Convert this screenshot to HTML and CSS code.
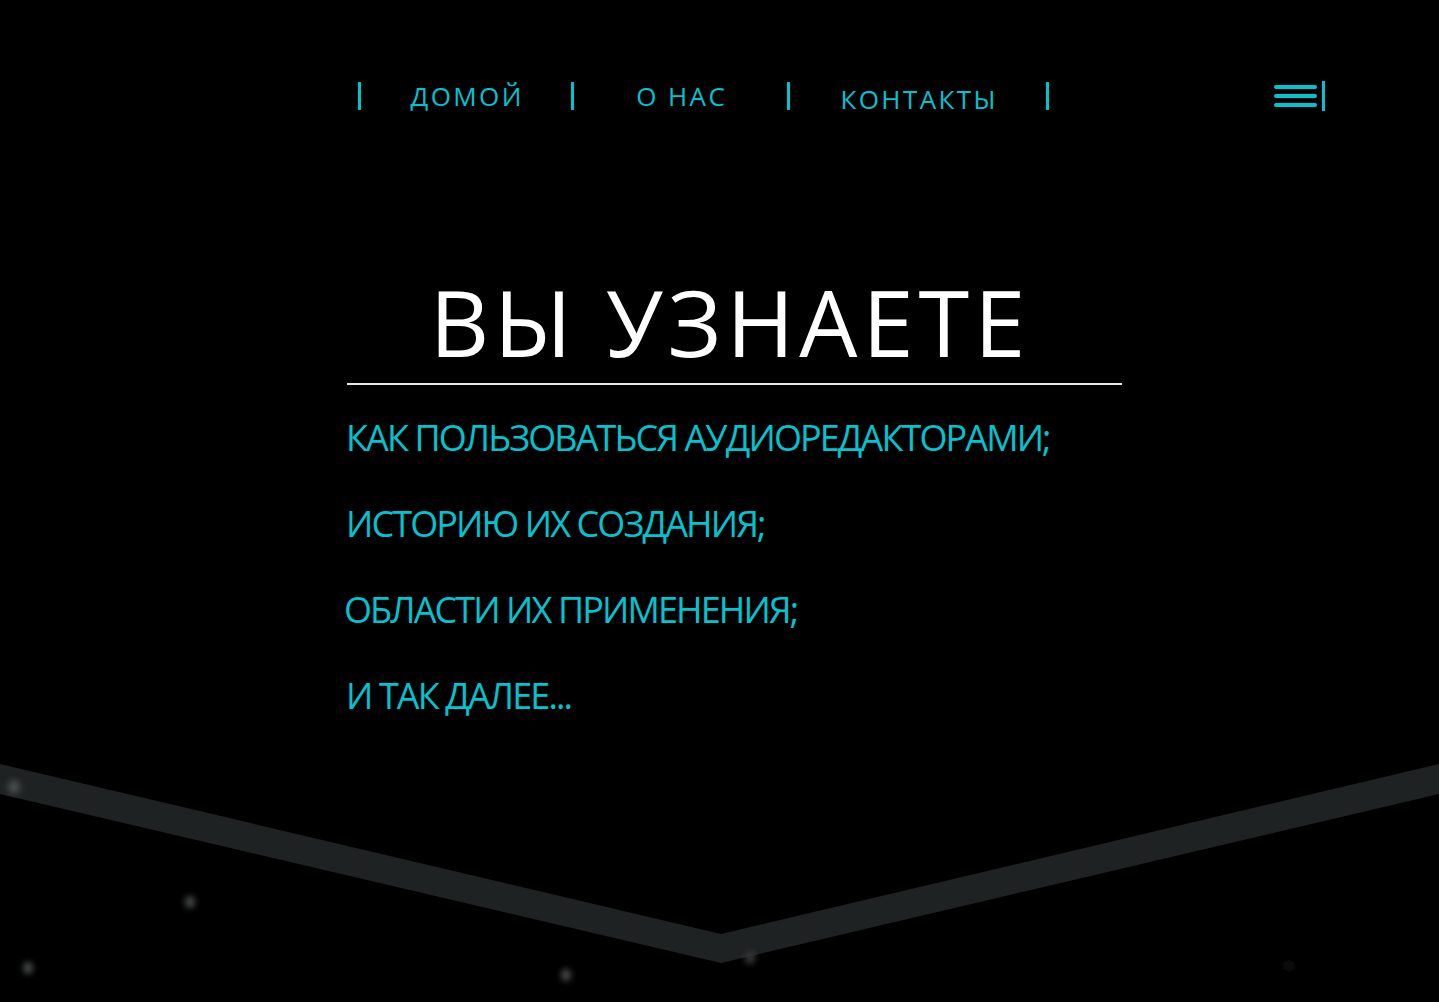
FILE: index.html
```html
<!DOCTYPE html>
<html lang="ru">
<head>
<meta charset="utf-8">
<title>Вы узнаете</title>
<link rel="stylesheet" href="styles.css">
</head>
<body>
<div class="page">
  <svg class="backdrop" width="1439" height="1002" viewBox="0 0 1439 1002" aria-hidden="true">
    <defs>
      <filter id="blur" x="-2" y="-2" width="5" height="5"><feGaussianBlur stdDeviation="3"/></filter>
    </defs>
    <polygon points="0,764 721,934 1439,764 1439,794 721,963 0,794" fill="#1f2223"/>
    <g filter="url(#blur)" fill="#4a4d4e">
      <ellipse cx="14" cy="787" rx="6" ry="7"/>
      <ellipse cx="190" cy="902" rx="5" ry="6"/>
      <ellipse cx="28" cy="968" rx="5" ry="6"/>
      <ellipse cx="566" cy="975" rx="5" ry="6"/>
      <ellipse cx="750" cy="958" rx="5" ry="6" fill="#3a3d3e"/>
      <ellipse cx="1289" cy="966" rx="4" ry="5" fill="#161818"/>
    </g>
  </svg>

  <header class="header">
    <nav class="nav">
      <span class="sep"></span>
      <a class="nav-link w1" href="#">ДОМОЙ</a>
      <span class="sep"></span>
      <a class="nav-link w2" href="#">О НАС</a>
      <span class="sep"></span>
      <a class="nav-link w3 low" href="#">КОНТАКТЫ</a>
      <span class="sep"></span>
    </nav>
    <button class="burger" aria-label="Меню">
      <svg width="52" height="31" viewBox="0 0 52 31">
        <rect x="0" y="4" width="43" height="4" rx="2" fill="#00c4d0"/>
        <rect x="0" y="13" width="43" height="4" rx="2" fill="#00c4d0"/>
        <rect x="0" y="22" width="43" height="4" rx="2" fill="#00c4d0"/>
        <rect x="48" y="0" width="3" height="30" fill="#00c4d0"/>
      </svg>
    </button>
  </header>

  <main class="content">
    <h1 class="title">ВЫ УЗНАЕТЕ</h1>
    <ul class="list">
      <li>КАК ПОЛЬЗОВАТЬСЯ АУДИОРЕДАКТОРАМИ;</li>
      <li>ИСТОРИЮ ИХ СОЗДАНИЯ;</li>
      <li class="shift">ОБЛАСТИ ИХ ПРИМЕНЕНИЯ;</li>
      <li>И ТАК ДАЛЕЕ...</li>
    </ul>
  </main>
</div>
</body>
</html>
```

FILE: styles.css
```css
html, body {
  margin: 0;
  padding: 0;
  background: #000;
}

.page {
  position: relative;
  width: 1439px;
  height: 1002px;
  overflow: hidden;
  background: #000;
  font-family: "Open Sans", "Liberation Sans", sans-serif;
}

.backdrop {
  position: absolute;
  left: 0;
  top: 0;
  z-index: 0;
}

.header {
  position: relative;
  z-index: 1;
  display: flex;
  align-items: flex-start;
  padding: 82px 113px 0 358px;
}

.nav {
  display: flex;
  align-items: flex-start;
}

.sep {
  display: block;
  width: 3px;
  height: 28px;
  background: #00c4d0;
}

.nav-link {
  display: block;
  text-align: center;
  color: #00c4d0;
  text-decoration: none;
  font-size: 26px;
  line-height: 28px;
  letter-spacing: 2.4px;
  padding-left: 2.4px;
  box-sizing: border-box;
}

.w1 { width: 210px; }
.w2 { width: 213px; }
.w3 { width: 256px; }
.low { padding-top: 3px; }

.burger {
  margin-left: auto;
  margin-top: -1px;
  padding: 0;
  border: 0;
  background: none;
  display: block;
  line-height: 0;
}

.content {
  position: relative;
  z-index: 1;
  width: 775px;
  margin: 0 0 0 347px;
  padding-top: 161px;
}

.title {
  margin: 0;
  padding: 0 9px 14px 0;
  text-align: center;
  color: #fff;
  font-weight: 400;
  font-size: 92px;
  line-height: 95px;
  letter-spacing: 5px;
  border-bottom: 2px solid #e8e8e8;
}

.list {
  list-style: none;
  margin: 0;
  padding: 35px 0 0 0;
  display: flex;
  flex-direction: column;
  gap: 50px;
}

.list li {
  color: #00c4d0;
  font-size: 36px;
  line-height: 36px;
  letter-spacing: -1.9px;
  margin-left: -1px;
  white-space: nowrap;
}

.list li.shift {
  margin-left: -3px;
}
```
